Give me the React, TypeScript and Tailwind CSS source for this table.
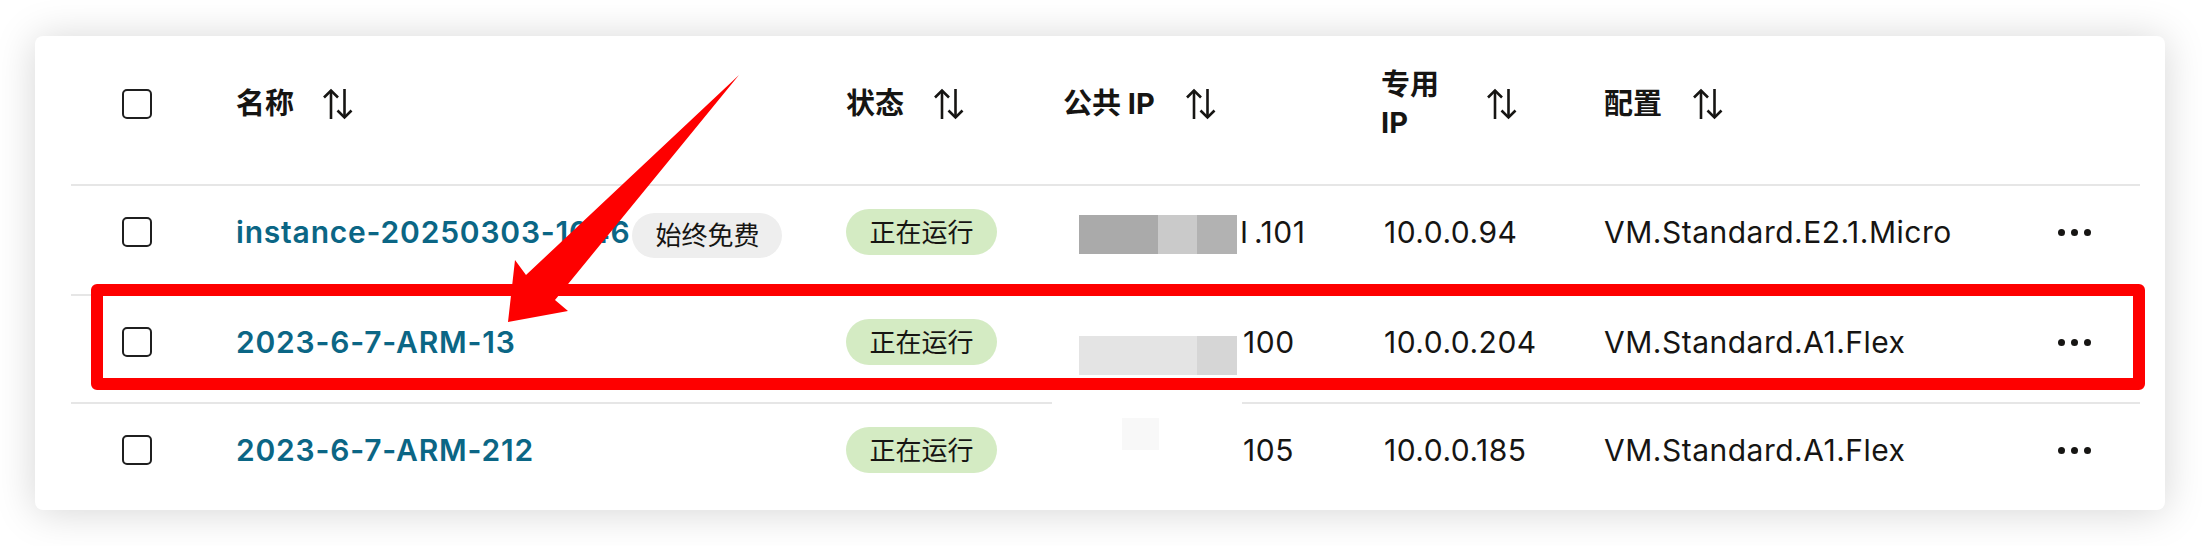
import React from "react";

const SortIcon = () => (
  <svg width="30" height="32" viewBox="0 0 30 32" fill="none" stroke="#161513" strokeWidth="2.6" className="shrink-0">
    <path d="M8 2.5V31" />
    <path d="M1 9.5L8 2.5L15 9.5" />
    <path d="M21.5 1V29.5" />
    <path d="M14.5 22.5L21.5 29.5L28.5 22.5" />
  </svg>
);

const Checkbox = () => (
  <div className="w-[30px] h-[30px] border-[2.6px] border-[#1f1f1f] rounded-[5px] bg-white" />
);

const Dots = () => (
  <div className="flex gap-[6px] items-center">
    <div className="w-[7px] h-[7px] rounded-full bg-[#161513]" />
    <div className="w-[7px] h-[7px] rounded-full bg-[#161513]" />
    <div className="w-[7px] h-[7px] rounded-full bg-[#161513]" />
  </div>
);

const Running = () => (
  <div className="w-[151px] h-[46px] rounded-full bg-[#d4ebc3] flex items-center justify-center text-[26px] text-[#161513]">
    正在运行
  </div>
);

const cols = "grid grid-cols-[165px_610px_217px_318px_223px_454px_82px]";
const link = "font-semibold text-[#0b6685] text-[30px] tracking-[0.8px]";
const cell = "text-[30px] tracking-[0.5px]";

export default function App() {
  return (
    <div className="relative w-[2202px] h-[546px] bg-white overflow-hidden font-['Inter','Noto_Sans_CJK_SC',sans-serif] text-[#161513]">
      <div className="pt-[36px] pl-[35px]">
        <div className="w-[2130px] h-[474px] bg-white rounded-[8px] shadow-[0_2px_40px_rgba(0,0,0,0.17)] pl-[36px] pr-[25px]">
          {/* header */}
          <div className={`${cols} h-[148px] items-center pb-[12px] text-[29px] font-bold`}>
            <div className="pl-[51px]"><Checkbox /></div>
            <div className="flex items-center gap-[29px]"><span>名称</span><SortIcon /></div>
            <div className="flex items-center gap-[30px]"><span>状态</span><SortIcon /></div>
            <div className="flex items-center gap-[31px]"><span>公共 IP</span><SortIcon /></div>
            <div className="flex items-center gap-[28px]">
              <span className="w-[78px] leading-[38px]">专用<br />IP</span>
              <SortIcon />
            </div>
            <div className="flex items-center gap-[31px]"><span>配置</span><SortIcon /></div>
            <div />
          </div>

          {/* row 1 */}
          <div className={`${cols} h-[110px] items-center pb-[16px] border-t-2 border-[#e6e6e6]`}>
            <div className="pl-[51px]"><Checkbox /></div>
            <div className="flex items-center">
              <span className={link}>instance-20250303-1046</span>
              <span className="ml-[2px] w-[150px] h-[45px] mt-[6px] shrink-0 rounded-full bg-[#eeeeee] flex items-center justify-center text-[26px]">始终免费</span>
            </div>
            <div><Running /></div>
            <div className="flex items-center pl-[16px]">
              <div className="flex w-[158px] h-[39px] mt-[5px] shrink-0">
                <div className="w-[79px] bg-[#aaaaaa]" />
                <div className="w-[39px] bg-[#cacaca]" />
                <div className="w-[40px] bg-[#b2b2b2]" />
              </div>
              <span className={`ml-[3px] ${cell}`}><span className="tracking-[6px]">I</span>.101</span>
            </div>
            <div className={`pl-[3px] ${cell}`}>10.0.0.94</div>
            <div className={cell}>VM.Standard.E2.1.Micro</div>
            <div><Dots /></div>
          </div>

          {/* row 2 */}
          <div className={`${cols} h-[108px] items-center pb-[14px] border-t-2 border-[#e6e6e6]`}>
            <div className="pl-[51px]"><Checkbox /></div>
            <div className="flex items-center">
              <span className={link}>2023-6-7-ARM-13</span>
            </div>
            <div><Running /></div>
            <div className="flex items-center pl-[16px]">
              <div className="flex w-[158px] h-[39px] translate-y-[13px] shrink-0">
                <div className="w-[118px] bg-[#e4e4e4]" />
                <div className="w-[40px] bg-[#d6d6d6]" />
              </div>
              <span className={`ml-[6px] ${cell}`}>100</span>
            </div>
            <div className={`pl-[3px] ${cell}`}>10.0.0.204</div>
            <div className={cell}>VM.Standard.A1.Flex</div>
            <div><Dots /></div>
          </div>

          {/* row 3 */}
          <div className={`relative ${cols} h-[108px] items-center pb-[14px] border-t-2 border-[#e6e6e6]`}>
            <div className="absolute left-[981px] top-[-2px] w-[190px] h-[2px] bg-white" />
            <div className="pl-[51px]"><Checkbox /></div>
            <div className="flex items-center">
              <span className={link}>2023-6-7-ARM-212</span>
            </div>
            <div><Running /></div>
            <div className="flex items-center pl-[16px]">
              <div className="w-[158px] h-[39px] flex items-center shrink-0">
                <div className="ml-[43px] w-[37px] h-[32px] bg-[#f8f8f8] -translate-y-[16px]" />
              </div>
              <span className={`ml-[6px] ${cell}`}>105</span>
            </div>
            <div className={`pl-[3px] ${cell}`}>10.0.0.185</div>
            <div className={cell}>VM.Standard.A1.Flex</div>
            <div><Dots /></div>
          </div>
        </div>
      </div>

      {/* annotation overlays */}
      <div className="absolute left-[91px] top-[284px] w-[2054px] h-[106px] border-[12px] border-[#fe0000] rounded-[6px] pointer-events-none" />
      <svg className="absolute left-0 top-0 pointer-events-none" width="2202" height="546" viewBox="0 0 2202 546">
        <polygon points="508,322 515,260 526,275 739,75 555,300 568,311" fill="#fe0000" />
      </svg>
    </div>
  );
}
